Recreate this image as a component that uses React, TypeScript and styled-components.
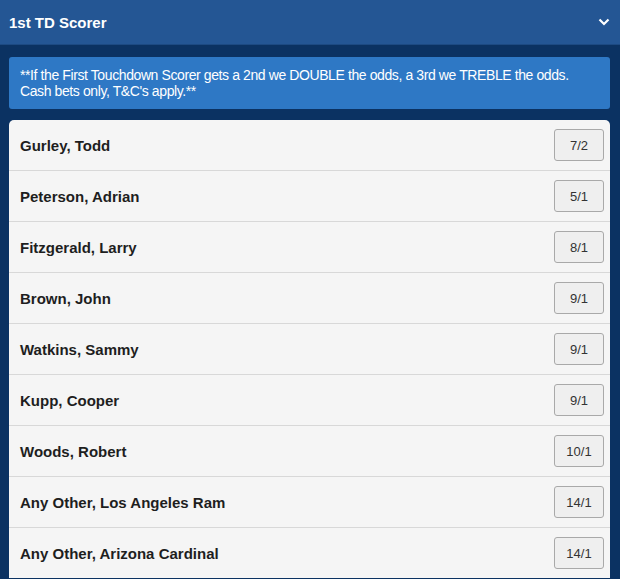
import * as React from "react";
import styled, { createGlobalStyle } from "styled-components";

const GlobalStyle = createGlobalStyle`
	html, body {
		margin: 0;
		padding: 0;
		background: #0b3262;
		font-family: "Liberation Sans", Arial, sans-serif;
	}
`;

const Header = styled.div`
	display: flex;
	align-items: center;
	justify-content: space-between;
	height: 44px;
	padding: 0 10px 0 9px;
	background: #245694;
	border-bottom: 1px solid #1d4a82;
	color: #fff;
	font-size: 15px;
	font-weight: bold;
`;

const Body = styled.div`
	padding: 12px 10px 0 9px;
`;

const Banner = styled.div`
	background: #2e78c5;
	color: #fff;
	font-size: 14px;
	letter-spacing: -0.4px;
	line-height: 16px;
	padding: 10px 11px;
	border-radius: 3px;
	margin-bottom: 11px;
`;

const Card = styled.div`
	background: #f5f5f5;
	border-radius: 5px 5px 0 0;
	overflow: hidden;
`;

const Row = styled.div`
	display: flex;
	align-items: center;
	justify-content: space-between;
	height: 50px;
	padding: 0 6px 0 11px;
	border-bottom: 1px solid #d8d8d8;
	color: #1e1e1e;
	font-size: 15px;
	font-weight: bold;

	&:last-child {
		border-bottom: none;
	}
`;

const Odds = styled.button`
	width: 50px;
	height: 32px;
	background: #efefef;
	border: 1px solid #a9a9a9;
	border-radius: 3px;
	color: #333;
	font-family: inherit;
	font-size: 13px;
	font-weight: normal;
	padding: 0;
`;

const runners = [
	{ name: "Gurley, Todd", odds: "7/2" },
	{ name: "Peterson, Adrian", odds: "5/1" },
	{ name: "Fitzgerald, Larry", odds: "8/1" },
	{ name: "Brown, John", odds: "9/1" },
	{ name: "Watkins, Sammy", odds: "9/1" },
	{ name: "Kupp, Cooper", odds: "9/1" },
	{ name: "Woods, Robert", odds: "10/1" },
	{ name: "Any Other, Los Angeles Ram", odds: "14/1" },
	{ name: "Any Other, Arizona Cardinal", odds: "14/1" },
];

function Chevron() {
	return (
		<svg width="12" height="8" viewBox="0 0 12 8">
			<path d="M1.5 1.5 L6 6 L10.5 1.5" fill="none" stroke="#fff" strokeWidth="2.2" />
		</svg>
	);
}

export default function App() {
	return (
		<>
			<GlobalStyle />
			<Header>
				<span>1st TD Scorer</span>
				<Chevron />
			</Header>
			<Body>
				<Banner>
					**If the First Touchdown Scorer gets a 2nd we DOUBLE the odds, a 3rd we TREBLE the odds.
					Cash bets only, T&amp;C's apply.**
				</Banner>
				<Card>
					{runners.map((r) => (
						<Row key={r.name}>
							<span>{r.name}</span>
							<Odds>{r.odds}</Odds>
						</Row>
					))}
				</Card>
			</Body>
		</>
	);
}
